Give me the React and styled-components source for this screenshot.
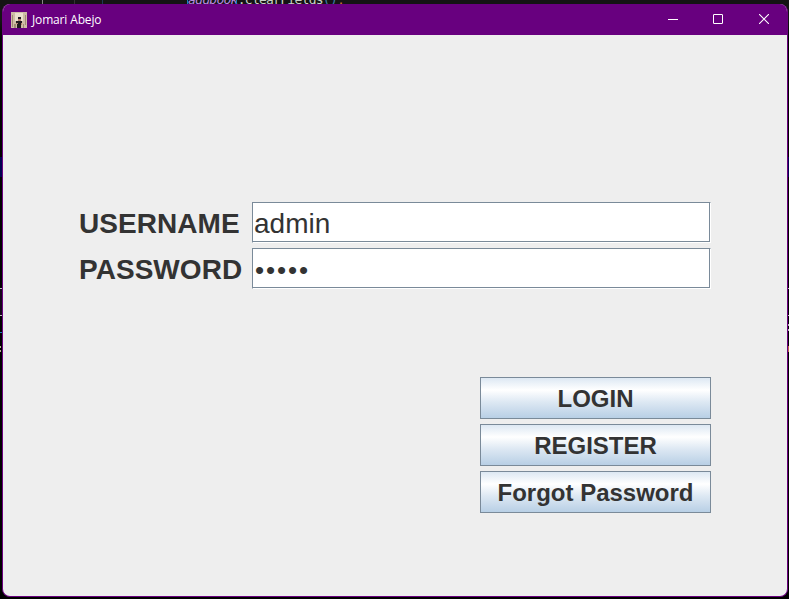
import React from "react";
import styled, { createGlobalStyle } from "styled-components";

const GlobalStyle = createGlobalStyle`
  * { box-sizing: border-box; }
  html, body { margin: 0; padding: 0; background: #000; overflow: hidden; }
`;

const Desktop = styled.main`
  position: relative;
  width: 789px;
  height: 599px;
  padding: 4px 1px 2px 2px;
  overflow: hidden;
  background: linear-gradient(#141414 0 20px, #000 40px);
  font-family: "Liberation Sans", Arial, sans-serif;
`;

const CodeLine = styled.div`
  position: absolute;
  left: 188px;
  top: -9px;
  font: 13px/17px "DejaVu Sans Mono", monospace;
  letter-spacing: -0.73px;
  white-space: pre;
  color: #c9d1c9;
`;

const Variable = styled.span`
  font-style: italic;
  color: #b78be0;
`;

const Paren = styled.span`
  color: #3c7fae;
`;

const Semi = styled.span`
  color: #cc7832;
`;

const EditorMark = styled.i`
  position: absolute;
  left: ${(p) => p.$x}px;
  top: ${(p) => p.$y}px;
  width: ${(p) => p.$w || 2}px;
  height: ${(p) => p.$h || 1}px;
  background: ${(p) => p.$color};
`;

const Window = styled.section`
  position: relative;
  display: flex;
  flex-direction: column;
  width: 786px;
  height: 593px;
  border: 1px solid #6a007f;
  border-top: 0;
  border-radius: 8px;
  overflow: hidden;
  background: #eee;
`;

const TitleBar = styled.header`
  display: flex;
  flex: none;
  align-items: center;
  height: 31px;
  padding-left: 8px;
  background: #68007f;
  color: #fff;
`;

const AppIcon = styled.svg`
  width: 16px;
  height: 16px;
  margin-right: 5px;
`;

const Title = styled.span`
  flex: 1;
  font: 12px/16px "Open Sans", "Noto Sans", sans-serif;
  letter-spacing: -0.15px;
`;

const Caption = styled.button`
  display: grid;
  place-items: center;
  width: 46px;
  height: 31px;
  padding: 0 0 1px;
  border: 0;
  background: none;
  color: #fff;

  svg {
    display: block;
  }
`;

const Content = styled.div`
  display: flex;
  flex-direction: column;
  padding: 167px 76px 0;
`;

const Form = styled.div`
  display: grid;
  grid-template-columns: 173px 459px;
  row-gap: 5px;
`;

const Label = styled.label`
  height: 41px;
  font-size: 28px;
  font-weight: bold;
  line-height: 43px;
  letter-spacing: 0.05px;
  color: #333;
  white-space: nowrap;
`;

const Field = styled.div`
  height: 41px;
  padding-left: ${(p) => (p.$masked ? "2px" : "1px")};
  border: 1px solid #7a8a99;
  border-right-color: #fff;
  border-bottom-color: #fff;
  box-shadow: inset -1px -1px #7a8a99;
  background: #fff;
  color: #333;
  font-size: ${(p) => (p.$masked ? "26px" : "28px")};
  line-height: ${(p) => (p.$masked ? "43px" : "41px")};
  letter-spacing: ${(p) => (p.$masked ? "1.9px" : "0")};
`;

const Actions = styled.div`
  display: flex;
  flex-direction: column;
  align-self: flex-end;
  gap: 5px;
  width: 231px;
  margin-top: 88px;
`;

const Action = styled.button`
  height: 42px;
  padding: 2px 0 0;
  border: 1px solid #7a8a99;
  background: linear-gradient(#dde8f3 0%, #fff 30%, #dde8f3 60%, #b8cfe5 100%);
  color: #333;
  font: bold 24px/38px "Liberation Sans", Arial, sans-serif;
`;

const marks = [
  { x: 42, y: 0, h: 4, w: 1, color: "#888" },
  { x: 74, y: 0, h: 4, w: 1, color: "#333" },
  { x: 102, y: 0, h: 4, w: 1, color: "#1d3a58" },
  { x: 187, y: 0, h: 4, w: 1, color: "#1680b8" },
  { x: 236, y: 0, h: 4, w: 1, color: "#1680b8" },
  { x: 0, y: 157, h: 20, color: "#000050" },
  { x: 0, y: 288, color: "#bbb" },
  { x: 0, y: 289, h: 26, color: "#15051a" },
  { x: 0, y: 315, color: "#bbb" },
  { x: 0, y: 332, color: "#1680b8" },
  { x: 0, y: 346, w: 1, h: 2, color: "#b5ae91" },
  { x: 0, y: 350, w: 1, h: 2, color: "#b5ae91" },
  { x: 788, y: 157, w: 1, h: 20, color: "#000050" },
  { x: 788, y: 288, w: 1, color: "#bbb" },
  { x: 788, y: 315, w: 1, color: "#bbb" },
  { x: 788, y: 324, w: 1, h: 2, color: "#bbb" },
  { x: 788, y: 329, w: 1, h: 2, color: "#bbb" },
  { x: 788, y: 346, w: 1, h: 6, color: "#b86545" },
];

export default function App() {
  return (
    <Desktop>
      <GlobalStyle />
      <CodeLine>
        <Variable>addbook</Variable>.clearFields<Paren>()</Paren><Semi>;</Semi>
      </CodeLine>
      {marks.map((m, i) => (
        <EditorMark key={i} $x={m.x} $y={m.y} $w={m.w} $h={m.h} $color={m.color} />
      ))}
      <Window>
        <TitleBar>
          <AppIcon viewBox="0 0 16 16" shapeRendering="crispEdges">
            <path fill="#cdbda5" d="M0 0h16v16H0z" />
            <path fill="#ebe0cd" d="M4 1h8v8H4z" />
            <path fill="#a08a74" d="M1 3h1v12H1zM14 3h1v10h-1zM3 12h2v4H3zM12 12h1v4h-1z" />
            <path fill="#201a20" d="M7 5h3v2H7zM5 9h6v3H5zM6 12h4v4H6z" />
            <path fill="#b98270" d="M7 7h3v2H7zM5 11h2v1H5zM10 11h1v2h-1z" />
          </AppIcon>
          <Title>Jomari Abejo</Title>
          <Caption aria-label="Minimize">
            <svg width="12" height="10"><path d="M2 5.500h10" stroke="currentColor" /></svg>
          </Caption>
          <Caption aria-label="Maximize">
            <svg width="10" height="10" fill="none"><rect x=".5" y=".5" width="9" height="9" rx=".2" stroke="currentColor" /></svg>
          </Caption>
          <Caption aria-label="Close">
            <svg width="10" height="10"><path d="M0 0l10 10M10 0L0 10" stroke="currentColor" strokeWidth="1.1" /></svg>
          </Caption>
        </TitleBar>
        <Content>
          <Form>
            <Label>USERNAME</Label>
            <Field>admin</Field>
            <Label>PASSWORD</Label>
            <Field $masked>•••••</Field>
          </Form>
          <Actions>
            <Action>LOGIN</Action>
            <Action>REGISTER</Action>
            <Action>Forgot Password</Action>
          </Actions>
        </Content>
      </Window>
    </Desktop>
  );
}
